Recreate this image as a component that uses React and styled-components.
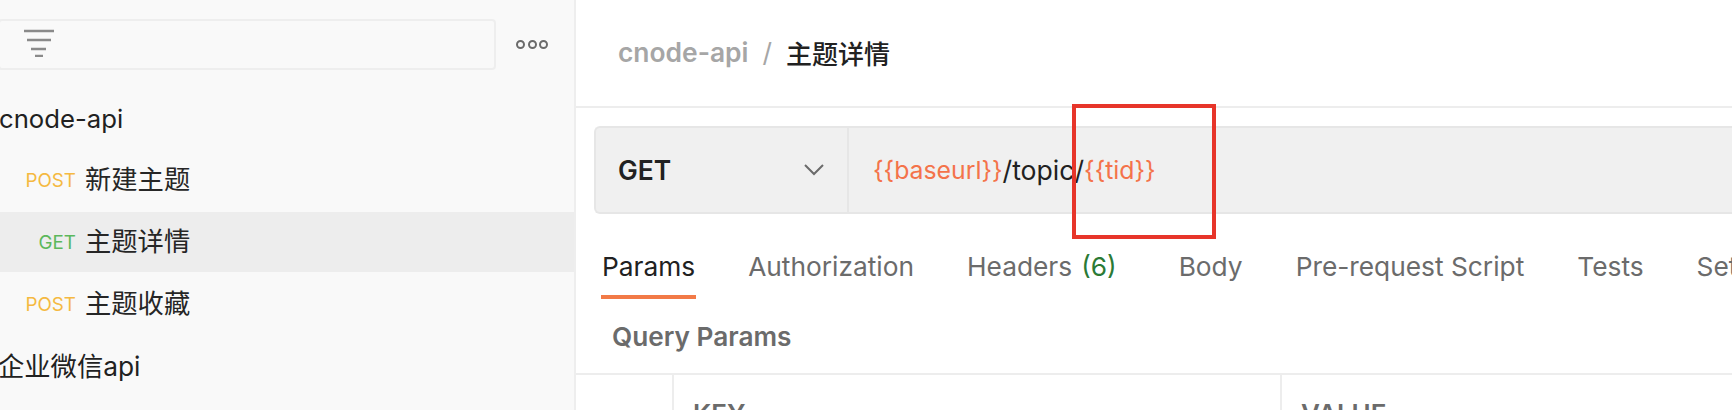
import React from 'react';
import styled, { createGlobalStyle } from 'styled-components';

const GlobalStyle = createGlobalStyle`
    html, body { margin: 0; padding: 0; background: #fff; overflow: hidden; }
    body { font-family: Inter, "Noto Sans CJK SC", sans-serif; }
`;

const Page = styled.div`
    display: flex; width: 1732px; height: 410px; overflow: hidden;
`;

const Sidebar = styled.aside`
    flex: 0 0 576px; box-sizing: border-box; background: #f9f9f9; border-right: 2px solid #eeeeee; overflow: hidden;
`;

const FilterRow = styled.div`
    display: flex; align-items: center; height: 51px; margin: 19px 0 0 -2px;
`;

const FilterBox = styled.div`
    display: flex; align-items: center; box-sizing: border-box; width: 498px; height: 51px; padding: 0 0 3px 23px; border: 2px solid #eeeeee; border-radius: 4px;
`;

const MoreButton = styled.div`
    display: flex; gap: 2.5px; margin-left: 20px;
`;

const Dot = styled.span`
    box-sizing: border-box; width: 9px; height: 9px; border: 2px solid #6b6b6b; border-radius: 50%;
`;

const Tree = styled.div`
    display: flex; flex-direction: column; gap: 2px; margin-top: 20px;
`;

const Folder = styled.div`
    display: flex; align-items: center; height: 58px; margin: ${p => p.$pushed ? '2px 0 0 -2px' : '0 0 0 -1px'}; font-size: ${p => p.$size}px; color: #212121; line-height: 1; white-space: nowrap;
`;

const Request = styled.div`
    display: flex; align-items: center; height: 60px; background: ${p => p.$active ? '#ededed' : 'transparent'}; white-space: nowrap;
`;

const Method = styled.span`
    flex: 0 0 76px; text-align: right; font-size: 18.8px; color: ${p => p.$color};
`;

const RequestName = styled.span`
    margin-left: 9px; font-size: 26.3px; color: #262626; line-height: 1;
`;

const Main = styled.main`
    position: relative; flex: 1; min-width: 0; overflow: hidden;
`;

const Header = styled.header`
    display: flex; align-items: center; box-sizing: border-box; height: 108px; padding: 0 0 2px 42px; border-bottom: 2px solid #ededed; font-size: 26.4px; white-space: nowrap;
`;

const Crumb = styled.span`
    font-weight: 600; color: #a6a6a6;
`;

const Slash = styled.span`
    margin: 0 14px; color: #a6a6a6;
`;

const CrumbCurrent = styled.span`
    font-size: 26px; font-weight: 500; color: #212121;
`;

const UrlBar = styled.div`
    display: flex; box-sizing: border-box; height: 88px; margin: 18px 0 0 18px; background: #f0f0f0; border: 2px solid #e6e6e6; border-right: 0; border-radius: 6px 0 0 6px;
`;

const MethodSelect = styled.div`
    display: flex; align-items: center; justify-content: space-between; box-sizing: border-box; width: 253px; padding: 0 22px; border-right: 2px solid #e6e6e6; font-size: 26.4px; font-weight: 600; color: #212121;
`;

const UrlText = styled.div`
    display: flex; align-items: center; padding-left: 24px; font-size: 26.6px; color: #212121; white-space: nowrap;
`;

const Variable = styled.span`
    font-size: 24.8px; color: #f4734a;
`;

const Tabs = styled.nav`
    display: flex; height: 66px; margin: 19px 0 0 25px; white-space: nowrap;
`;

const Tab = styled.div`
    box-sizing: border-box; height: 66px; padding: 14px 1px 0; margin-right: ${p => p.$gap}px; font-size: 26.3px; line-height: 40px; color: ${p => p.$active ? '#212121' : '#6b6b6b'}; border-bottom: 4px solid ${p => p.$active ? '#f27a47' : 'transparent'};
`;

const Count = styled.span`
    margin-left: 9px; color: #2a7a35;
`;

const SectionTitle = styled.div`
    height: 74px; padding: 22px 0 0 36px; box-sizing: border-box; font-size: 26.2px; font-weight: 600; line-height: 32px; color: #6b6b6b;
`;

const TableHead = styled.div`
    display: grid; grid-template-columns: 96px 608px 1fr; height: 60px; border-top: 2px solid #ededed;
`;

const HeadCell = styled.div`
    box-sizing: border-box; padding: 24px 0 0 19px; border-left: ${p => p.$first ? 0 : '2px solid #ededed'}; font-size: 26px; font-weight: 600; line-height: 30px; color: #6b6b6b;
`;

const Highlight = styled.div`
    position: absolute; left: 496px; top: 104px; width: 144px; height: 135px; box-sizing: border-box; border: 4px solid #e7352a;
`;

const FilterIcon = () => (
    <svg width="32" height="28" viewBox="0 0 32 28" fill="none" stroke="#8a8a8a" strokeWidth="2.4">
        <path d="M1 2h30M4 11h24M8 20h15M12 27h8" />
    </svg>
);

const Chevron = () => (
    <svg width="22" height="14" viewBox="0 0 22 14" fill="none" stroke="#6b6b6b" strokeWidth="2">
        <path d="M2 2l9 9 9-9" />
    </svg>
);

const App = () => {
    return (
        <Page>
            <GlobalStyle />
            <Sidebar>
                <FilterRow>
                    <FilterBox><FilterIcon /></FilterBox>
                    <MoreButton><Dot /><Dot /><Dot /></MoreButton>
                </FilterRow>
                <Tree>
                    <Folder $size={25.7}>cnode-api</Folder>
                    <Request><Method $color="#f5b942">POST</Method><RequestName>新建主题</RequestName></Request>
                    <Request $active><Method $color="#5cb85c">GET</Method><RequestName>主题详情</RequestName></Request>
                    <Request><Method $color="#f5b942">POST</Method><RequestName>主题收藏</RequestName></Request>
                    <Folder $pushed $size={26.3}>企业微信api</Folder>
                </Tree>
            </Sidebar>
            <Main>
                <Header>
                    <Crumb>cnode-api</Crumb><Slash>/</Slash><CrumbCurrent>主题详情</CrumbCurrent>
                </Header>
                <UrlBar>
                    <MethodSelect>GET<Chevron /></MethodSelect>
                    <UrlText><Variable>{'{{baseurl}}'}</Variable>/topic/<Variable>{'{{tid}}'}</Variable></UrlText>
                </UrlBar>
                <Tabs>
                    <Tab $active $gap={51}>Params</Tab>
                    <Tab $gap={51}>Authorization</Tab>
                    <Tab $gap={60}>Headers<Count>(6)</Count></Tab>
                    <Tab $gap={51}>Body</Tab>
                    <Tab $gap={51}>Pre-request Script</Tab>
                    <Tab $gap={51}>Tests</Tab>
                    <Tab $gap={0}>Settings</Tab>
                </Tabs>
                <SectionTitle>Query Params</SectionTitle>
                <TableHead>
                    <HeadCell $first />
                    <HeadCell>KEY</HeadCell>
                    <HeadCell>VALUE</HeadCell>
                </TableHead>
                <Highlight />
            </Main>
        </Page>
    );
};

export default App;
